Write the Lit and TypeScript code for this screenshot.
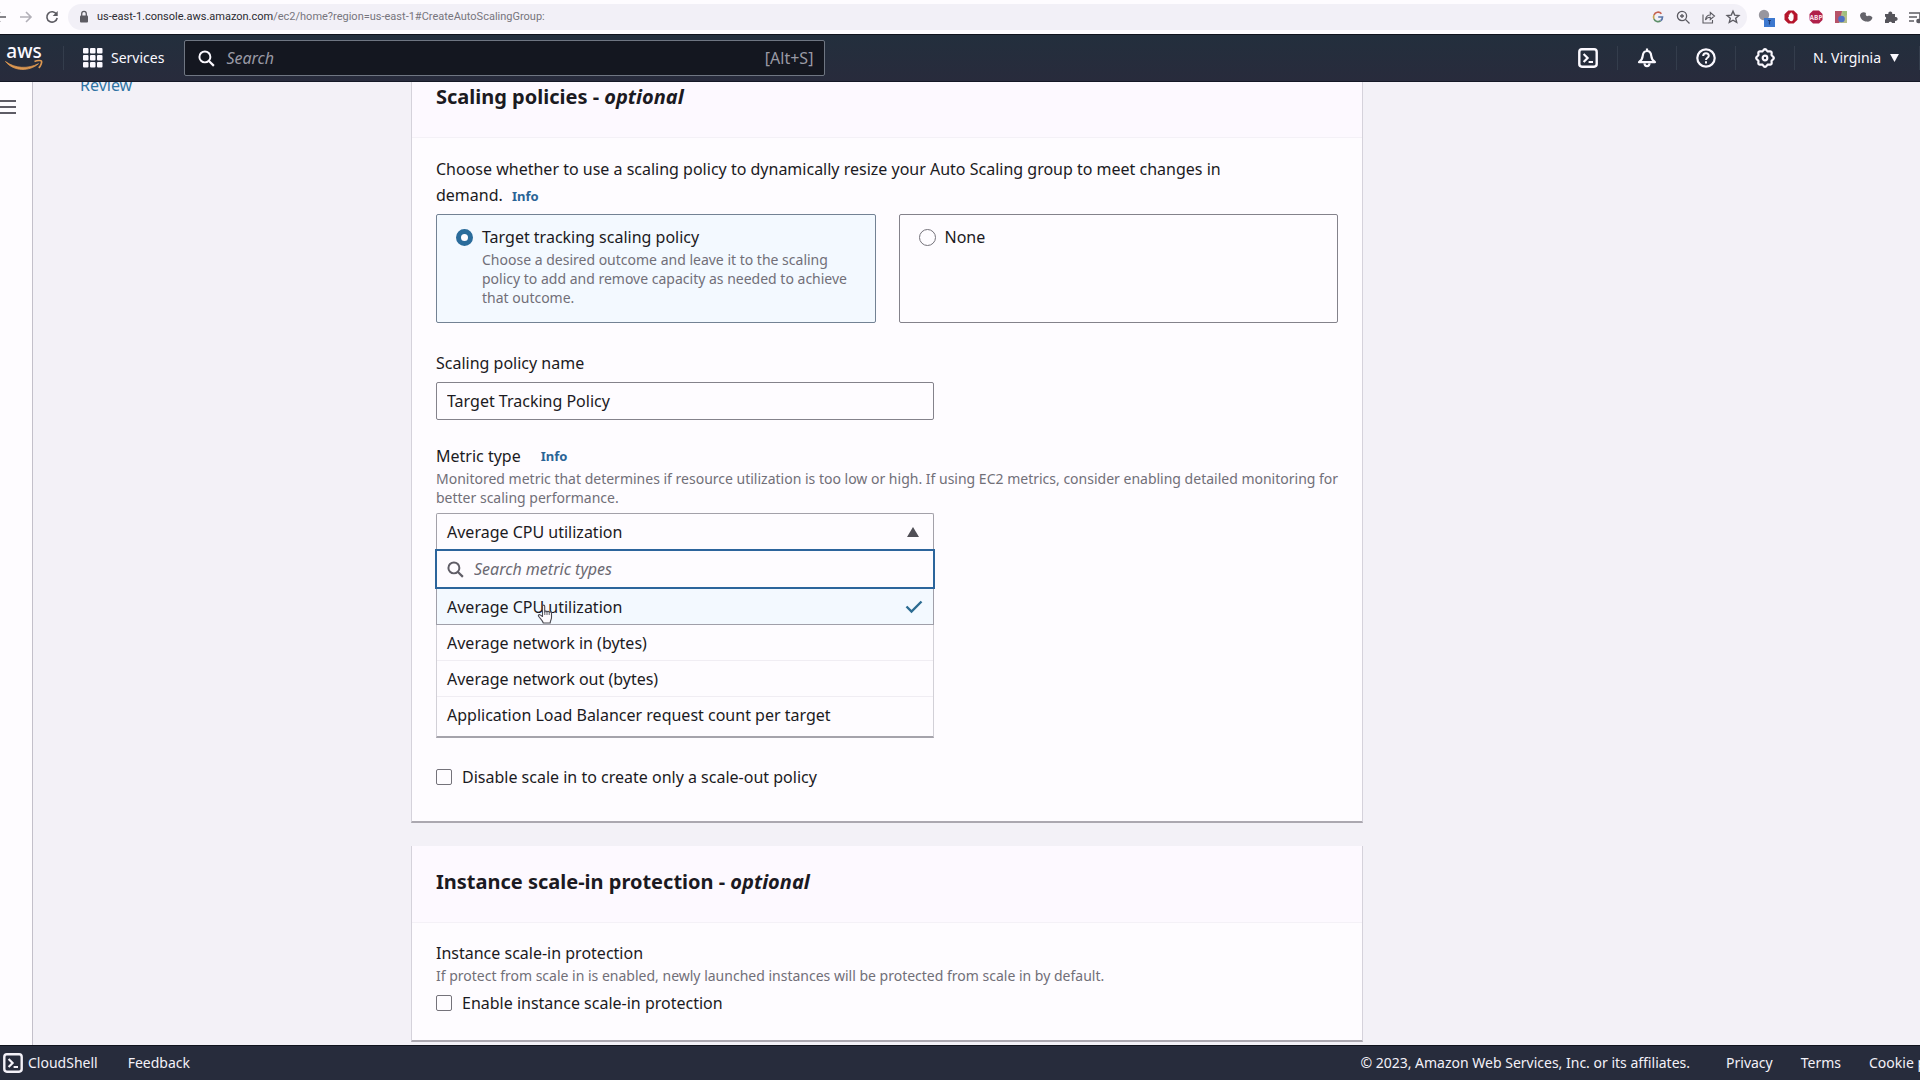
import { LitElement, html, css, svg } from "lit";
import { customElement, state } from "lit/decorators.js";

const METRICS = [
  "Average CPU utilization",
  "Average network in (bytes)",
  "Average network out (bytes)",
  "Application Load Balancer request count per target",
];

const shellIcon = html`<svg class="icon" viewBox="0 0 20 20" aria-hidden="true">
  <rect x="1.3" y="1.3" width="17.4" height="17.4" rx="2.6" fill="none" stroke="currentColor" stroke-width="2.4" />
  <path d="M5.6 6l4 4-4 4M10.6 14h4.4" fill="none" stroke="currentColor" stroke-width="2.2" />
</svg>`;

const magnifier = html`<svg class="magnifier" viewBox="0 0 18 18" aria-hidden="true">
  <circle cx="7.3" cy="7.3" r="5.8" fill="none" stroke="currentColor" stroke-width="2.1" />
  <path d="M11.6 11.6l5.2 5.2" stroke="currentColor" stroke-width="2.3" />
</svg>`;

const gearPath = (() => {
  const points: string[] = [];
  for (let i = 0; i < 96; i++) {
    const a = (i / 96) * Math.PI * 2;
    const r = 8 + 0.8 * Math.cos(a * 8);
    points.push(`${(10 + r * Math.cos(a)).toFixed(2)} ${(10 + r * Math.sin(a)).toFixed(2)}`);
  }
  return `M${points.join("L")}Z`;
})();

@customElement("app-root")
export class AppRoot extends LitElement {
  @state() private metric = METRICS[0];

  static styles = css`
    :host {
      display: flex;
      flex-direction: column;
      height: 100vh;
      overflow: hidden;
      background: #f3f1f7;
      color: #1b1a22;
      font-family: "Noto Sans", sans-serif;
      font-size: 16px;
      line-height: 24px;
    }
    * { box-sizing: border-box; }
    button, input { font: inherit; color: inherit; margin: 0; }
    button { border: 0; padding: 0; background: none; display: flex; align-items: center; text-align: left; }
    a { color: inherit; text-decoration: none; }
    svg { display: block; flex: none; }
    h2, p { margin: 0; }

    .browser {
      display: flex;
      align-items: center;
      flex: none;
      height: 34px;
      background: #fefcff;
      color: #5c5b62;
      overflow: hidden;
    }
    .browser svg { width: 16px; height: 16px; }
    .history { display: flex; gap: 10px; flex: none; width: 70px; margin-left: -8px; }
    .address {
      display: flex;
      align-items: center;
      flex: 1;
      height: 26px;
      margin-left: 6px;
      padding: 0 6px 0 8px;
      border-radius: 13px;
      background: #f2f0f7;
      font-family: Roboto, sans-serif;
      font-size: 11px;
    }
    .url { flex: 1; min-width: 0; margin-left: 5px; color: #77757d; }
    .url b { font-weight: 400; color: #2b2a30; }
    .tools { display: flex; gap: 9px; }
    .extensions { display: flex; gap: 9px; margin: 0 -4px 0 11px; }

    .topbar {
      display: flex;
      align-items: center;
      flex: none;
      height: 48px;
      background: linear-gradient(#232f3d, #282b3c);
      border-top: 1px solid #10131d;
      border-bottom: 1px solid #141826;
      color: #fbf9ff;
      font-size: 14px;
    }
    .icon { width: 20px; height: 20px; }
    .logo { width: 63px; padding-left: 5px; }
    .divider { width: 1px; height: 24px; background: #343d4c; flex: none; }
    .services { gap: 8px; margin: 0 20px 0 19px; }
    .search {
      display: flex;
      align-items: center;
      width: 641px;
      height: 36px;
      padding: 0 11px 0 13px;
      gap: 11px;
      border: 1px solid #6f7682;
      border-radius: 2px;
      background: #141720;
      font-size: 16px;
    }
    .magnifier { width: 17px; height: 17px; }
    .search input, .filter input {
      flex: 1;
      min-width: 0;
      border: 0;
      padding: 0;
      background: none;
      outline: none;
    }
    .search input::placeholder { color: #9a9aa5; font-style: italic; opacity: 1; }
    .shortcut { color: #9a9aa5; }
    .utilities { display: flex; align-items: center; margin-left: auto; }
    .utility { padding: 0 19px; }
    .region { gap: 9px; padding: 0 20px 0 18px; }

    .page { display: flex; flex: 1; min-height: 0; overflow: hidden; }
    .rail {
      flex: none;
      width: 33px;
      padding-top: 17px;
      background: #fefcff;
      border-right: 1px solid #c3c0ca;
    }
    .scroll {
      display: grid;
      grid-template-columns: 331px minmax(0, 952px);
      align-content: start;
      flex: 1;
      margin-top: -21px;
      padding: 0 47px;
    }
    .steps { padding-top: 12px; }
    .steps a { color: #2f74a3; }
    .cards { display: grid; gap: 23px; }
    .card {
      background: #fefcff;
      border: 1px solid #d5d2db;
      border-top: 0;
      border-bottom: 2px solid #aba8b0;
    }
    .card-head {
      padding: 22px 24px 26px;
      background: #fdf9ff;
      border-bottom: 1px solid #f4f1f7;
    }
    h2 { font-size: 20px; line-height: 28px; font-weight: 700; }
    .card-body { padding: 18px 24px 25px; }
    .policy { padding-bottom: 32px; }
    .intro { max-width: 810px; line-height: 26px; }
    .info { color: #2a6496; font-size: 13px; font-weight: 700; }
    .intro .info { margin-left: 5px; }

    .tiles { display: grid; grid-template-columns: 1fr 1fr; gap: 23px; margin-top: 5px; }
    .tile {
      display: grid;
      grid-template-columns: 17px 1fr;
      column-gap: 9px;
      align-content: start;
      padding: 10px 20px 15px 19px;
      border: 1px solid #84828b;
      border-radius: 2px;
    }
    .tile.selected { background: #f3f9ff; border-color: #738294; }
    .tile input {
      appearance: none;
      width: 17px;
      height: 17px;
      margin-top: 4px;
      border: 1px solid #74727a;
      border-radius: 50%;
      background: #fefcff;
    }
    .tile input:checked { border: 5px solid #2a6c9b; }
    .tile .hint { grid-column: 2; }
    .hint { display: block; padding-top: 1px; color: #716f78; font-size: 14px; line-height: 19px; }

    .field { margin-top: 24px; }
    .field .hint { margin-right: -12px; }
    .tiles + .field { margin-top: 28px; }
    .label { display: flex; gap: 20px; }
    .control { width: 498px; margin-top: 7px; }
    .text {
      display: block;
      height: 38px;
      padding: 0 10px;
      border: 1px solid #84828b;
      border-radius: 2px;
      background: #fefcff;
    }
    .trigger {
      display: flex;
      justify-content: space-between;
      width: 100%;
      height: 36px;
      padding: 0 14px 0 10px;
      border: 1px solid #a3a1a9;
      border-bottom: 0;
      border-radius: 2px 2px 0 0;
    }
    .filter {
      display: flex;
      align-items: center;
      gap: 10px;
      height: 40px;
      margin: 0 -1px;
      padding: 0 10px;
      border: 2px solid #2c659c;
      color: #5f5d66;
    }
    .filter input::placeholder { color: #6b6972; font-style: italic; opacity: 1; }
    .options {
      padding-bottom: 3px;
      border: 1px solid #d2d0d7;
      border-top: 0;
      border-bottom: 2px solid #a5a3ab;
    }
    .option {
      justify-content: space-between;
      width: 100%;
      height: 36px;
      padding: 0 10px;
      border-bottom: 1px solid #f0edf3;
    }
    .option:last-child { border-bottom: 0; }
    .option.selected {
      width: calc(100% + 2px);
      margin: 0 -1px;
      background: #f3f9ff;
      border: 1px solid #a09fa9;
      border-top: 0;
    }
    .check-row { display: flex; align-items: center; gap: 10px; margin-top: 6px; }
    .select-wrap { position: relative; margin-top: 6px; }
    .options-gap { margin-top: 27px; }
    .check-row input {
      appearance: none;
      width: 16px;
      height: 16px;
      border: 1px solid #74727a;
      border-radius: 2px;
      background: #fefcff;
    }
    .pointer { position: absolute; left: 101px; top: 91px; width: 17px; height: 20px; }

    .footer {
      display: flex;
      align-items: center;
      flex: none;
      height: 35px;
      padding-left: 3px;
      background: #272c3c;
      border-top: 1px solid #10131d;
      color: #f3f1f8;
      font-size: 14px;
      white-space: nowrap;
    }
    .footer button { gap: 5px; margin-right: 30px; }
    .legal { display: flex; gap: 28px; margin-left: auto; }
    .copyright { margin-right: 8px; }
    .cookies { width: 51px; overflow: hidden; }
  `;

  private browserBar() {
    return html`<div class="browser">
      <div class="history">
        <svg viewBox="0 0 16 16"><path d="M14 8H3M8 3L3 8l5 5" fill="none" stroke="currentColor" stroke-width="1.6" /></svg>
        <svg viewBox="0 0 16 16"><path d="M2 8h11M8 3l5 5-5 5" fill="none" stroke="#b2b0b8" stroke-width="1.6" /></svg>
        <svg viewBox="0 0 16 16"><path d="M12.6 5.3A5.2 5.2 0 1 0 13.2 9" fill="none" stroke="currentColor" stroke-width="1.6" /><path d="M13.7 2v5h-5z" fill="currentColor" /></svg>
      </div>
      <div class="address">
        <svg viewBox="0 0 16 16"><rect x="4" y="6.5" width="8" height="7" rx="1" fill="currentColor" /><path d="M5.7 7V4.7a2.3 2.3 0 0 1 4.6 0V7" fill="none" stroke="currentColor" stroke-width="1.3" /></svg>
        <div class="url"><b>us-east-1.console.aws.amazon.com</b>/ec2/home?region=us-east-1#CreateAutoScalingGroup:</div>
        <div class="tools">
          <svg viewBox="0 0 16 16" fill="none" stroke-width="1.7"><path d="M11.4 4.7A4.4 4.4 0 0 0 4 6" stroke="#c5604f" /><path d="M4 6a4.6 4.6 0 0 0 0 4" stroke="#c7a552" /><path d="M4 10a4.4 4.4 0 0 0 6.6 1.8" stroke="#5d8f69" /><path d="M8.2 8h4.3c0 1.8-.7 3-1.9 3.8" stroke="#5a76a8" /></svg>
          <svg viewBox="0 0 16 16" fill="none" stroke="currentColor" stroke-width="1.3"><circle cx="7" cy="7" r="4.6" /><path d="M10.4 10.4L14.5 14.5M7 5v4M5 7h4" /></svg>
          <svg viewBox="0 0 16 16" fill="none" stroke="currentColor" stroke-width="1.1"><path d="M3 5.5V14h9.5v-3M5.5 11c.3-3.5 2-5 4.8-5V3.5L14.5 7l-4.2 3.5V8.3C8.2 8.3 6.6 9 5.5 11z" /></svg>
          <svg viewBox="0 0 16 16" fill="none" stroke="currentColor" stroke-width="1.4"><path d="M8 2.2l1.7 3.9 4.2.4-3.2 2.8 1 4.100L8 11.200l-3.700 2.200 1-4.100-3.200-2.800 4.200-.4z" /></svg>
        </div>
      </div>
      <div class="extensions">
        <svg viewBox="0 0 16 16" overflow="visible"><circle cx="6" cy="6" r="5.2" fill="#98969e" /><rect x="6" y="9" width="11" height="9" fill="#3d78cf" /><path d="M10 11.5h3M11.5 11.5v4" stroke="#1f3f78" stroke-width="1.2" /></svg>
        <svg viewBox="0 0 16 16"><path d="M5.3 1.5h5.4l3.8 3.8v5.4l-3.8 3.8H5.3l-3.8-3.8V5.3z" fill="#b5152b" /><path d="M5.8 8V5.5h1V4.2h1V3.6h1v.8h1v1h.8V9c0 2-1 3.2-2.3 3.2S5.8 11 5 8.6z" fill="#fff" /></svg>
        <svg viewBox="0 0 16 16"><path d="M5 1.500h6L14.500 5v6L11 14.500H5L1.500 11V5z" fill="#b0204a" /><text x="8" y="10.500" text-anchor="middle" font-size="6.5" font-weight="700" fill="#f6dfe8">ABP</text></svg>
        <svg viewBox="0 0 16 16"><rect x="2" y="2" width="12" height="12" fill="#b5bd8b" /><path d="M2 2h7L6 14H2z" fill="#b75368" /><path d="M9.500 2H14v4l-3 1z" fill="#9fbf7d" /><circle cx="8.5" cy="10" r="3.3" fill="#4f70c4" /></svg>
        <svg viewBox="0 0 16 16"><path d="M2 6.200c.5-2.500 3.600-4 6-2.200-.6 1.300-.2 2.700 1.200 3.200 1.900-.8 4.200-.4 5.300 1.600-1 3-3.600 4.200-5.800 3.800C5.200 12.200 2.300 9.800 2 6.200z" fill="#65646b" /></svg>
        <svg viewBox="0 0 16 16"><path d="M2 5h3.400a2 2 0 1 1 3.800 0H12v3a2 2 0 1 1 0 3.800V14H9a1.700 1.700 0 0 0-3.300 0H2v-3.200a1.800 1.800 0 0 0 0-3.400z" fill="#55545b" /></svg>
        <svg viewBox="0 0 16 16" fill="none" stroke="currentColor" stroke-width="1.6"><path d="M1 4h11M1 8h8M1 12h5" /><circle cx="10.5" cy="12" r="1.5" fill="currentColor" /><path d="M12 12V5h3" /></svg>
      </div>
    </div>`;
  }

  private topBar() {
    return html`<header class="topbar">
      <a class="logo" href="#home" aria-label="aws">
        <svg width="38" height="26" viewBox="0 0 38 26" overflow="visible">
          <text x="19" y="13" text-anchor="middle" font-size="19" font-weight="500" fill="#fbf9ff">aws</text>
          <path d="M0.500 16.500c9.500 7.200 22.500 7.600 33 2.200-9 7.800-24.500 8.200-33-2.200z" fill="#dc9750" stroke="#dc9750" stroke-width=".8" />
          <path d="M29.500 16.500c3-1.200 6.500-1.300 7-.4.5 1-.4 4.500-2.700 6.800" fill="none" stroke="#dc9750" stroke-width="1.7" />
        </svg>
      </a>
      <span class="divider"></span>
      <button class="services" type="button">
        <svg class="icon" viewBox="0 0 20 20" fill="currentColor">
          ${[0, 7, 14].map((y) => [0, 7, 14].map((x) => svg`<rect x=${x} y=${y} width="5.5" height="5.5" rx="1" />`))}
        </svg>
        Services
      </button>
      <div class="search">
        ${magnifier}
        <input type="search" placeholder="Search" aria-label="Search" />
        <span class="shortcut">[Alt+S]</span>
      </div>
      <div class="utilities">
        <button class="utility" type="button" aria-label="CloudShell">${shellIcon}</button>
        <span class="divider"></span>
        <button class="utility" type="button" aria-label="Notifications">
          <svg class="icon" viewBox="0 0 20 20" fill="none" stroke="currentColor" stroke-width="2.2" stroke-linejoin="round">
            <path d="M2 14.200c2.800-2 3.500-3.700 3.700-6.200C6 5 7.500 3 10 3s4 2 4.300 5c.2 2.500.9 4.200 3.700 6.200zM10 3V.5M7.500 15.500c.2 3.500 4.800 3.500 5 0" />
          </svg>
        </button>
        <span class="divider"></span>
        <button class="utility" type="button" aria-label="Help">
          <svg class="icon" viewBox="0 0 20 20" fill="none" stroke="currentColor" stroke-width="2.2">
            <circle cx="10" cy="10" r="8.7" />
            <path d="M7.200 8c0-3.600 5.600-3.600 5.600-.3 0 2-2.800 2-2.800 4.200M10 13.300v2.200" stroke-width="2" />
          </svg>
        </button>
        <span class="divider"></span>
        <button class="utility" type="button" aria-label="Settings">
          <svg class="icon" viewBox="0 0 20 20" fill="none" stroke="currentColor" stroke-width="2.2">
            <path d=${gearPath} /><circle cx="10" cy="10" r="2.3" />
          </svg>
        </button>
        <span class="divider"></span>
        <button class="region" type="button">
          N. Virginia
          <svg width="9" height="8" viewBox="0 0 10 9"><path d="M0 0h10L5 9z" fill="currentColor" /></svg>
        </button>
        <span class="divider"></span>
      </div>
    </header>`;
  }

  private metricSelect() {
    return html`<div class="control select-wrap">
      <button class="trigger" type="button" id="metric" aria-haspopup="listbox" aria-expanded="true">
        ${this.metric}
        <svg width="12" height="10" viewBox="0 0 12 10"><path d="M6 0l6 10H0z" fill="#504f56" /></svg>
      </button>
      <div class="filter">
        ${magnifier}
        <input type="text" placeholder="Search metric types" aria-label="Search metric types" />
      </div>
      <div class="options" role="listbox">
        ${METRICS.map(
          (name) => html`<button
            type="button"
            role="option"
            aria-selected=${name === this.metric}
            class="option ${name === this.metric ? "selected" : ""}"
            @click=${() => (this.metric = name)}
          >
            ${name}
            ${name === this.metric
              ? html`<svg width="18" height="14" viewBox="0 0 18 14"><path d="M1.500 6.500l5 5L16.500 1.500" fill="none" stroke="#2c6c92" stroke-width="2.4" /></svg>`
              : ""}
          </button>`
        )}
      </div>
      <svg class="pointer" viewBox="0 0 17 20">
        <path
          d="M5.500 12.500V2.300c0-1.600 2.200-1.600 2.200 0V8c0-1.300 2.300-1.200 2.300.2 0-1.200 2.300-1.100 2.300.3 0-1 2.200-.9 2.200.6v4.400c0 2-1.300 3-1.300 5.500H6.300C5.500 16.500 3 14.500 1.600 12.300c-.8-1.300.8-2.200 1.900-1.200z"
          fill="#fefcff" stroke="#4a4951" stroke-width="1.1" stroke-linejoin="round"
        />
        <path d="M7.800 8v3M10 8.500V11M12.200 9v2" stroke="#4a4951" stroke-width=".9" />
      </svg>
    </div>`;
  }

  render() {
    return html`
      ${this.browserBar()} ${this.topBar()}
      <div class="page">
        <div class="rail">
          <button type="button" aria-label="Open navigation">
            <svg width="16" height="16" viewBox="0 0 16 16"><path d="M0 2h16M0 8h16M0 14h16" stroke="#5e5c65" stroke-width="2" /></svg>
          </button>
        </div>
        <div class="scroll">
          <nav class="steps"><a href="#review">Review</a></nav>
          <main class="cards">
            <section class="card">
              <div class="card-head"><h2>Scaling policies - <em>optional</em></h2></div>
              <div class="card-body policy">
                <p class="intro">
                  Choose whether to use a scaling policy to dynamically resize your Auto Scaling group to meet changes in
                  demand. <a class="info" href="#policy-info">Info</a>
                </p>
                <div class="tiles">
                  <label class="tile selected">
                    <input type="radio" name="policy" checked />
                    <span>Target tracking scaling policy</span>
                    <span class="hint">Choose a desired outcome and leave it to the scaling policy to add and remove capacity as needed to achieve that outcome.</span>
                  </label>
                  <label class="tile">
                    <input type="radio" name="policy" />
                    <span>None</span>
                  </label>
                </div>
                <div class="field">
                  <label class="label" for="policy-name">Scaling policy name</label>
                  <input class="control text" id="policy-name" type="text" value="Target Tracking Policy" />
                </div>
                <div class="field">
                  <div class="label"><label for="metric">Metric type</label><a class="info" href="#metric-info">Info</a></div>
                  <span class="hint">Monitored metric that determines if resource utilization is too low or high. If using EC2 metrics, consider enabling detailed monitoring for better scaling performance.</span>
                  ${this.metricSelect()}
                </div>
                <label class="check-row options-gap"><input type="checkbox" />Disable scale in to create only a scale-out policy</label>
              </div>
            </section>
            <section class="card">
              <div class="card-head"><h2>Instance scale-in protection - <em>optional</em></h2></div>
              <div class="card-body">
                <div>Instance scale-in protection</div>
                <span class="hint">If protect from scale in is enabled, newly launched instances will be protected from scale in by default.</span>
                <label class="check-row"><input type="checkbox" />Enable instance scale-in protection</label>
              </div>
            </section>
          </main>
        </div>
      </div>
      <footer class="footer">
        <button type="button">${shellIcon}CloudShell</button>
        <a href="#feedback">Feedback</a>
        <div class="legal">
          <span class="copyright">© 2023, Amazon Web Services, Inc. or its affiliates.</span>
          <a href="#privacy">Privacy</a>
          <a href="#terms">Terms</a>
          <a class="cookies" href="#cookies">Cookie preferences</a>
        </div>
      </footer>
    `;
  }
}
